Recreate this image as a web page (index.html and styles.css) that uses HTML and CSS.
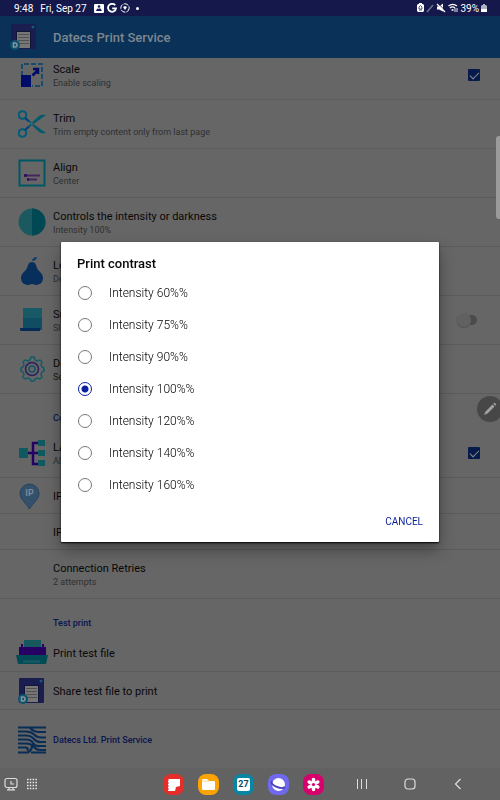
FILE: index.html
```html
<!DOCTYPE html>
<html lang="en">
<head>
  <meta charset="UTF-8" />
  <meta name="viewport" content="width=device-width, initial-scale=1" />
  <title>Datecs Print Service</title>
  <link rel="stylesheet" href="styles.css">
</head>
<body>
  <svg class="defs" aria-hidden="true">
    <symbol id="logo" viewBox="0 0 28 28">
      <rect x="1" y="1" width="25" height="25" rx="1" fill="#191d50"/>
      <circle cx="23" cy="4" r="1.500" fill="#125b7c"/>
      <path d="M6 8h15v17H6z" fill="#111535"/>
      <path d="M7 9h13v16H7z" fill="#777"/>
      <path d="M8 11.500h11M8 14.500h11M8 17.500h11M8 20.500h11" stroke="#505050"/>
      <circle cx="5" cy="22" r="5" fill="#0b5470"/>
      <path d="M3.500 20H5a2 2 0 0 1 0 4H3.500z" fill="none" stroke="#8a9499" stroke-width="1.500"/>
    </symbol>
  </svg>

  <div class="status">
    <span>9:48</span>
    <span class="day">Fri, Sep 27</span>
    <svg width="10" height="10" viewBox="0 0 10 10"><rect y="1" width="10" height="9" rx="1" fill="#fff"/><path d="M2 8c1-3 2-3 3-2l1-1 2 3z" fill="#14184a"/><circle cx="5" cy="3.500" r="1.300" fill="#14184a"/></svg>
    <svg width="10" height="10" viewBox="0 0 10 10" fill="none" stroke="#fff" stroke-width="1.800"><path d="M8.200 2.300A4 4 0 1 0 9 5.400H5.200"/></svg>
    <svg width="10" height="10" viewBox="0 0 10 10" fill="none" stroke="#fff"><circle cx="5" cy="5" r="4.200" stroke-dasharray="5 1"/><path d="M3 4l2-1 2 1-2 3z" fill="#fff" stroke="none"/></svg>
    <span class="dot"></span>
    <div class="status-right">
      <svg width="7" height="10" viewBox="0 0 7 10"><path d="M2 0h3v1h1l1 1v6l-1 1H1L0 8V2l1-1h1z" fill="#fff"/><path d="M2 6V4l1.500-1.500L5 4v2zM2 7h3" stroke="#565980" fill="none"/></svg>
      <svg width="8" height="10" viewBox="0 0 8 10"><path d="M1 9l6-7" stroke="#6d7092" stroke-width="1.600"/></svg>
      <svg width="10" height="10" viewBox="0 0 10 10"><path d="M1 3.500h2L7 .5v8L3 6.500H1z" fill="#fff"/><path d="M1.500 0l8 8" stroke="#14184a"/><path d="M1 1l8 8" stroke="#fff" stroke-width="1.300"/></svg>
      <svg width="10" height="10" viewBox="0 0 10 10" fill="none" stroke="#fff" stroke-width="1.300"><path d="M.5 3c2.500-2 6-2 8.500 0M2 5c1.500-1.300 3.500-1.300 5 0M3.500 7h2"/><path d="M7 5v4M9 9V5" stroke="#b7b9ce"/></svg>
      <span>39%</span>
      <svg width="6" height="10" viewBox="0 0 6 10"><path d="M2 1h2v1h1l1 1v6H0V3l1-1h1z" fill="#aeb0c6"/><path d="M0 6h6v3H0z" fill="#fff"/></svg>
    </div>
  </div>

  <header class="appbar">
    <svg class="icon" viewBox="0 0 28 28"><use href="#logo"/></svg>
    <h1>Datecs Print Service</h1>
  </header>

  <main class="list">
    <div class="row scrolled">
      <svg class="icon" viewBox="0 0 28 28"><path d="M4 15V3h20v22H14" fill="none" stroke="#194c6c" stroke-width="2" stroke-dasharray="5 2"/><path d="M3 14h10v12H3z" fill="#000d68"/><path d="M14.500 14.500l5-5M15 8h5v5" fill="none" stroke="#000d68" stroke-width="2.500"/></svg>
      <label class="text" for="scale"><span class="name">Scale</span><span class="sub">Enable scaling</span></label>
      <input class="check" type="checkbox" id="scale" checked>
    </div>
    <div class="row">
      <svg class="icon" viewBox="0 0 28 28"><path d="M7 19L21 6q3-2 7-1L14 15l-7 6zM7 8l14 14q3 2 7 1L14 13 7 6z" fill="#005b6a"/><g fill="none" stroke="#005b78" stroke-width="2"><circle cx="4.500" cy="5" r="3.800"/><circle cx="4.500" cy="23" r="3.800"/></g><path d="M7 8l4 3.500M7 20l4-3.500" stroke="#08427c" stroke-width="2"/></svg>
      <div class="text"><span class="name">Trim</span><span class="sub">Trim empty content only from last page</span></div>
    </div>
    <div class="row">
      <svg class="icon" viewBox="0 0 28 28"><rect x="1.500" y="1.500" width="25" height="25" fill="none" stroke="#005764" stroke-width="2"/><path d="M6 16.500h16M9 20.500h10" stroke="#44265f" stroke-width="2"/><path d="M6 16.500h3M9 20.500h2" stroke="#2d0860" stroke-width="2.500"/></svg>
      <div class="text"><span class="name">Align</span><span class="sub">Center</span></div>
    </div>
    <div class="row">
      <svg class="icon" viewBox="0 0 28 28"><circle cx="14" cy="14" r="13.500" fill="#1b5960"/><path d="M14 .5a13.500 13.500 0 0 1 0 27z" fill="#004854"/></svg>
      <div class="text"><span class="name">Controls the intensity or darkness</span><span class="sub">Intensity 100%</span></div>
    </div>
    <div class="row">
      <svg class="icon" viewBox="0 0 28 28"><path d="M14 5c4 0 4 4 5 6 1 3 6 5 6 10 0 5-4 7-7 7-2 0-2-1-4-1s-2 1-4 1c-3 0-7-2-7-7 0-5 5-7 6-10 1-2 1-6 5-6z" fill="#082f5c"/><path d="M14 4c0-2 2-4 5-4 0 2-2 4-5 4z" fill="#0b3e68"/></svg>
      <div class="text"><span class="name">Logo</span><span class="sub">Default</span></div>
    </div>
    <div class="row">
      <svg class="icon" viewBox="0 0 28 28"><path d="M5 2h19v22H5z" fill="#175965"/><path d="M5 12h19v12H5z" fill="#104d62"/><path d="M2 22h20v3H3l-1-1z" fill="#052c57"/></svg>
      <label class="text" for="small"><span class="name">Small</span><span class="sub">Slip</span></label>
      <input class="switch" type="checkbox" id="small">
    </div>
    <div class="row">
      <svg class="icon" viewBox="0 0 28 28" fill="none" stroke-width="1.500"><path d="M12 5l1-3h3l1 3 2 1 3-1 2 2-1 3 1 2 2 1v3l-2 1-1 2 1 3-2 2-3-1-2 1-1 2h-3l-1-2-2-1-3 1-2-2 1-3-1-2-2-1v-3l2-1 1-2-1-3 2-2 3 1z" stroke="#155a66"/><circle cx="14" cy="14" r="6.500" stroke="#28205f"/><circle cx="14" cy="14" r="3" stroke="#185163"/></svg>
      <div class="text"><span class="name">Device</span><span class="sub dark">Settings</span></div>
    </div>

    <h2>Connection</h2>
    <div class="row">
      <svg class="icon" viewBox="0 0 28 28"><path d="M10 14h12M22 4h-7v21h7" fill="none" stroke="#250064" stroke-width="2.500"/><path d="M1 9h9v10H1zM20 1h7v6h-7zM20 11h7v6h-7zM20 21h7v6h-7z" fill="#0e5a60"/></svg>
      <label class="text" for="lan"><span class="name">LAN</span><span class="sub">Allow</span></label>
      <input class="check" type="checkbox" id="lan" checked>
    </div>
    <div class="row single">
      <svg class="icon" viewBox="0 0 28 28"><path d="M11.500 27C8 21 2 17 2 11.500a9.500 9.500 0 0 1 19 0C21 17 15 21 11.500 27z" fill="#35506b" stroke="#24445f"/><text class="pin" x="11.500" y="14" text-anchor="middle">IP</text></svg>
      <div class="text"><span class="name">IP</span></div>
    </div>
    <div class="row single">
      <span class="icon"></span>
      <div class="text"><span class="name">IP</span></div>
    </div>
    <div class="row">
      <span class="icon"></span>
      <div class="text"><span class="name">Connection Retries</span><span class="sub">2 attempts</span></div>
    </div>

    <h2>Test print</h2>
    <div class="row action">
      <svg class="icon wide" viewBox="0 0 32 28"><path d="M8 1h17v8H8z" fill="#17585f"/><path d="M5 5h2v3h19V5h2v3h2v9H3V8h2z" fill="#270063"/><path d="M0 16h32l-2 9H2z" fill="#004b56"/><path d="M7 21h17v3H7z" fill="#155760"/></svg>
      <div class="text"><span class="name">Print test file</span></div>
    </div>
    <div class="row action">
      <svg class="icon" viewBox="0 0 28 28"><use href="#logo"/></svg>
      <div class="text"><span class="name">Share test file to print</span></div>
    </div>
    <div class="row about">
      <svg class="icon" viewBox="0 0 28 28" fill="none" stroke="#092d55" stroke-width="2.200"><path d="M0 1.500h28M0 5.500h8q5 0 8 3t7 3h5M12 2q4 4 9 4h7M0 9.500h8q5 0 8 3.500t7 3h5M0 13.500h8q5 0 7 3.500t7 3h6M0 17.500h8q6 0 6 3t-4 6M0 21.500h8q3 0 1 3M14 18q3 6 8 6h6M0 26.500h10M13 26.500h15"/></svg>
      <h2>Datecs Ltd. Print Service</h2>
    </div>
  </main>

  <nav class="taskbar">
    <div class="group tools">
      <button aria-label="Recent"><svg width="14" height="14" viewBox="0 0 14 14" fill="none" stroke="#ddd" stroke-width="1.200"><rect x="1" y="1.500" width="12" height="9" rx="2"/><path d="M7 4v3h3M3 12.800h8M5 10.500v2M9 10.500v2"/></svg></button>
      <button aria-label="Apps"><svg width="12" height="12" viewBox="0 0 12 12"><path d="M1 1.500h10M1 4.500h10M1 7.500h10M1 10.500h10" stroke="#eee" stroke-width="1.500" stroke-dasharray="1.500 1.300"/></svg></button>
    </div>
    <div class="group apps">
      <button class="app notes" aria-label="Notes"><svg viewBox="0 0 21 21"><path d="M5 5h12v7l-4 1-1 4H5z" fill="#fff"/><path d="M4 6h2M4 9h2M4 12h2M4 15h2" stroke="#e52d2a"/></svg></button>
      <button class="app files" aria-label="Files"><svg viewBox="0 0 21 21"><path d="M4 6q0-1 1-1h4l2 2h5q1 0 1 1v7q0 1-1 1H5q-1 0-1-1z" fill="#fff"/><path d="M4 7h7" stroke="#ffd58a"/></svg></button>
      <button class="app calendar" aria-label="Calendar"><span>27</span></button>
      <button class="app internet" aria-label="Internet"><svg viewBox="0 0 21 21"><circle cx="10.500" cy="10.500" r="6.500" fill="#fff"/><path d="M4 7c-3 4 10 9 13 6" fill="none" stroke="#4940b8" stroke-width="1.800"/></svg></button>
      <button class="app gallery" aria-label="Gallery"><svg viewBox="0 0 21 21"><path d="M10.500 5.500v10M6.200 8l8.600 5M6.200 13l8.600-5" stroke="#fff" stroke-width="3.500" stroke-linecap="round"/><circle cx="10.500" cy="10.500" r="1.600" fill="#d8006c"/></svg></button>
    </div>
    <div class="group keys">
      <button aria-label="Recents"><svg width="12" height="12" viewBox="0 0 12 12"><path d="M1.500 1v10M5.500 1v10M10.500 1v10" stroke="#ddd"/></svg></button>
      <button aria-label="Home"><svg width="12" height="12" viewBox="0 0 12 12"><rect x="1" y="1" width="10" height="10" rx="3" fill="none" stroke="#ddd" stroke-width="1.200"/></svg></button>
      <button aria-label="Back"><svg width="12" height="12" viewBox="0 0 12 12"><path d="M8.500 1l-5 5 5 5" fill="none" stroke="#ddd" stroke-width="1.200"/></svg></button>
    </div>
  </nav>

  <div class="edge-handle"></div>
  <button class="pen" aria-label="Pen"><svg width="14" height="14" viewBox="0 0 14 14"><path d="M1 13l1.500-3.500 7-7 2 2-7 7zM10.300 1.700l1-1q1 0 2 2l-1 1z" fill="#a0a0a0"/></svg></button>

  <div class="overlay">
    <form class="dialog" role="dialog" aria-labelledby="contrast">
      <h3 id="contrast">Print contrast</h3>
      <label class="option"><input type="radio" name="contrast">Intensity 60%%</label>
      <label class="option"><input type="radio" name="contrast">Intensity 75%%</label>
      <label class="option"><input type="radio" name="contrast">Intensity 90%%</label>
      <label class="option"><input type="radio" name="contrast" checked>Intensity 100%%</label>
      <label class="option"><input type="radio" name="contrast">Intensity 120%%</label>
      <label class="option"><input type="radio" name="contrast">Intensity 140%%</label>
      <label class="option"><input type="radio" name="contrast">Intensity 160%%</label>
      <div class="actions"><button type="button">CANCEL</button></div>
    </form>
  </div>
</body>
</html>
```

FILE: styles.css
```css
* {
  box-sizing: border-box;
}
body {
  margin: 0;
  height: 100vh;
  display: flex;
  flex-direction: column;
  background: #666;
  color: #080808;
  font-family: Roboto, sans-serif;
  font-size: 11px;
}
h1, h2, h3 {
  margin: 0;
}
button {
  padding: 0;
  border: 0;
  background: none;
  font-family: inherit;
}
svg {
  display: block;
  flex: none;
}
.defs {
  position: absolute;
  width: 0;
  height: 0;
}

/* status bar */
.status {
  height: 16px;
  flex: none;
  padding: 0 13px 0 14px;
  display: flex;
  align-items: center;
  gap: 3px;
  background: #14184a;
  color: #fff;
  font-size: 10px;
}
.day {
  margin: 0 4px;
}
.dot {
  width: 3px;
  height: 3px;
  margin-left: 3px;
  border-radius: 50%;
  background: #fff;
}
.status-right {
  margin-left: auto;
  display: flex;
  align-items: center;
  gap: 2px;
}

.appbar {
  height: 42px;
  flex: none;
  padding-left: 10px;
  display: flex;
  align-items: center;
  gap: 15px;
  background: #0a3157;
  color: #7d8790;
}
.appbar h1 {
  font-size: 13px;
  font-weight: 500;
}

/* settings list */
.list {
  flex: 1;
  overflow: hidden;
}
.row {
  min-height: 49px;
  padding: 0 20px 0 18px;
  display: flex;
  align-items: center;
  border-bottom: 1px solid #5b5b5b;
}
.scrolled {
  margin-top: -7px;
}
.single {
  min-height: 36px;
}
.action {
  min-height: 38px;
}
.icon {
  width: 28px;
  height: 28px;
  flex: none;
}
.row .icon {
  margin-right: 7px;
}
.row .wide {
  width: 32px;
  margin: 0 5px 0 -2px;
}
.text {
  flex: 1;
  padding-top: 2px;
}
.name, .sub {
  display: block;
  line-height: 14px;
}
.sub {
  color: #303030;
  font-size: 9px;
  line-height: 13px;
}
.dark {
  color: #181818;
}
.list h2 {
  color: #0a1550;
  font-size: 9px;
  font-weight: 500;
}
.list > h2 {
  padding: 17px 0 4px 53px;
  line-height: 14px;
}
.about {
  min-height: 60px;
  border: 0;
}
.pin {
  font-size: 9px;
  font-weight: 700;
  fill: #788999;
}

.check {
  appearance: none;
  width: 12px;
  height: 12px;
  margin: 0;
  border-radius: 1px;
  background: #061b4c;
}
.check::after {
  content: "";
  display: block;
  width: 8px;
  height: 4px;
  margin: 3px 2px;
  border: solid #8a8a8a;
  border-width: 0 0 1px 1px;
  transform: rotate(-45deg);
}
.switch {
  appearance: none;
  width: 20px;
  height: 10px;
  margin: 0 3px 0 0;
  display: flex;
  align-items: center;
  border-radius: 5px;
  background: #4b4b4b;
}
.switch::after {
  content: "";
  width: 14px;
  height: 14px;
  border-radius: 50%;
  background: #616161;
  box-shadow: 0 1px 1px #505050;
}

/* bottom bar */
.taskbar {
  height: 32px;
  flex: none;
  padding: 0 36px 0 4px;
  display: flex;
  align-items: center;
  background: #626262;
}
.group {
  display: flex;
  align-items: center;
}
.tools {
  gap: 8px;
}
.apps {
  margin: 0 32px 0 auto;
  gap: 14px;
}
.keys {
  gap: 36px;
}
.app {
  width: 21px;
  height: 21px;
  border-radius: 8px;
}
.notes {
  background: #e52d2a;
}
.files {
  background: #fca404;
}
.calendar {
  display: grid;
  place-items: center;
  background: #0786a4;
}
.calendar span {
  width: 13px;
  border-radius: 2px;
  background: #fff;
  color: #124a5c;
  font-size: 9px;
  font-weight: 700;
  line-height: 13px;
}
.internet {
  background: #7069ee;
}
.gallery {
  background: #d8006c;
}

.edge-handle {
  position: fixed;
  top: 136px;
  right: 0;
  width: 4px;
  height: 83px;
  border-radius: 3px 0 0 3px;
  background: #9b9b9b;
}
.pen {
  position: fixed;
  top: 396px;
  right: -3px;
  width: 26px;
  height: 26px;
  display: grid;
  place-items: center;
  border-radius: 50%;
  background: #474747;
}

/* contrast dialog */
.overlay {
  position: fixed;
  inset: 16px 0 32px;
  padding: 0 61px;
  display: grid;
  align-items: center;
}
.dialog {
  padding: 14px 16px 0;
  border-radius: 1px;
  background: #fff;
  box-shadow: 0 1px 2px #000, 0 8px 16px rgba(0, 0, 0, 0.35);
}
.dialog h3 {
  margin-bottom: 5px;
  font-size: 13px;
  font-weight: 500;
  line-height: 16px;
}
.option {
  height: 32px;
  padding-left: 1px;
  display: flex;
  align-items: center;
  gap: 17px;
  color: #000;
  font-size: 12px;
  font-weight: 300;
}
.option input {
  appearance: none;
  width: 14px;
  height: 14px;
  margin: 0;
  border: 1px solid #777;
  border-radius: 50%;
}
.option input:checked {
  border-color: #0b1f9c;
  background: radial-gradient(circle, #0b1f9c 3px, #fff 4px);
}
.actions {
  height: 41px;
  display: flex;
  align-items: center;
  justify-content: flex-end;
}
.actions button {
  color: #0b1f9c;
  font-size: 10px;
}
```
